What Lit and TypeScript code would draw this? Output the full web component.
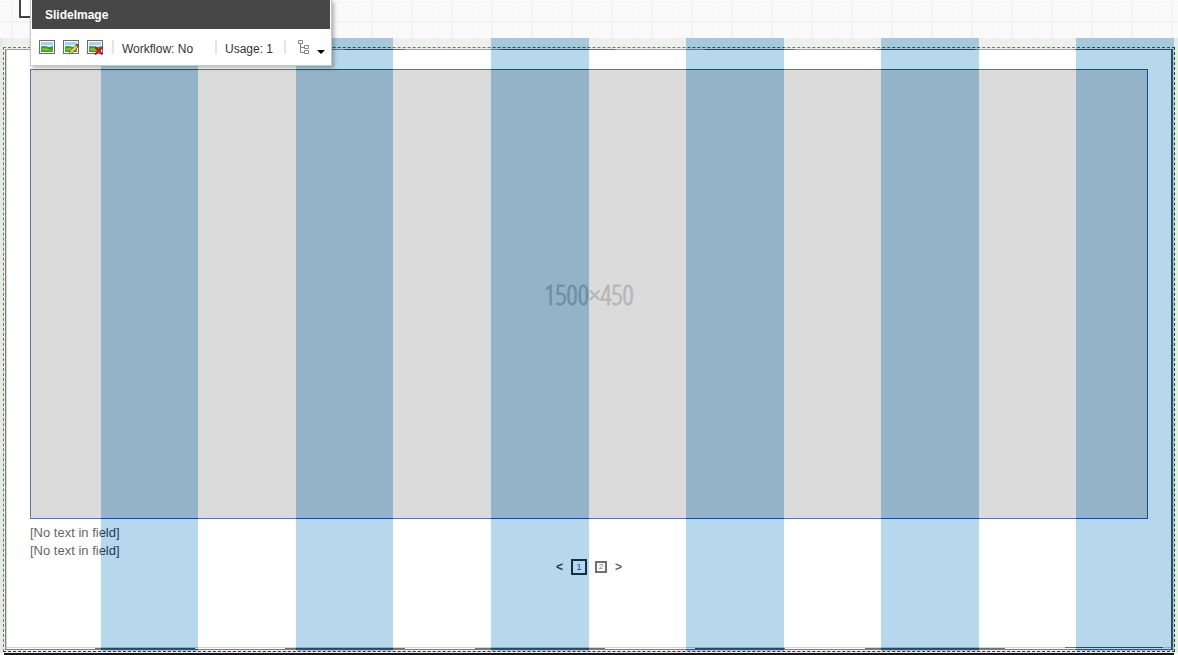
import { LitElement, html, svg, css } from "lit";
import { customElement } from "lit/decorators.js";

const picture = svg`
  <rect x="0.5" y="1.5" width="15" height="13" fill="#fff" stroke="#6b6b6b"/>
  <rect x="2" y="3" width="12" height="5" fill="#a5d2f0"/>
  <rect x="2" y="6" width="12" height="2" fill="#dceefa"/>
  <path d="M2 7.500Q5 6.500 8 7.500T14 7V13H2Z" fill="#3f9a2a"/>
  <path d="M2 10Q7 8 9 10T14 10V11.500Q8 12 2 11Z" fill="#7cc142"/>`;

@customElement("app-root")
export class AppRoot extends LitElement {
  static styles = css`
    :host {
      display: block;
      position: relative;
      min-height: 100vh;
      overflow: hidden;
      font: 13px/18px "Liberation Sans", Arial, sans-serif;
      color: #222;
      background-color: #fafafa;
      background-image:
        linear-gradient(90deg, #f3f3f3 2px, transparent 2px),
        linear-gradient(#f3f3f3 2px, transparent 2px),
        linear-gradient(90deg, #f7f7f7 1px, transparent 1px),
        linear-gradient(#f7f7f7 1px, transparent 1px);
      background-size: 40px 40px;
      background-position: 11px 0, 0 21px, 32px 0, 0 2px;
    }
    * { box-sizing: border-box; }
    .header { height: 38px; padding-left: 19px; }
    .tab { width: 60px; height: 18px; border: 2px solid #444; border-top: 0; background: #fff; }
    .stage { position: relative; padding: 9px 3px 1px; background: rgba(225, 225, 225, 0.65); }
    .zone { border: 1px dashed #006000; padding: 1px; }
    .panel {
      position: relative;
      border: 1px solid #444;
      background: #fff;
      padding: 19px 24px 20px;
      min-height: 601px;
    }
    .rough { position: absolute; inset: -1px; width: calc(100% + 2px); height: calc(100% + 2px); }
    .image {
      display: flex;
      align-items: center;
      justify-content: center;
      height: 450px;
      border: 1px solid #1e3c83;
      background: #ccc;
    }
    .size {
      font: 300 28px/36px "Open Sans Condensed Light", "Open Sans Condensed", "Liberation Sans Narrow", "Liberation Sans", sans-serif;
      color: #999;
      -webkit-text-stroke: 1px #999;
    }
    .fields { padding-top: 5px; }
    .fields p { margin: 0; }
    .pager {
      display: flex;
      align-items: center;
      justify-content: center;
      gap: 8px;
      height: 14px;
    }
    button { font: inherit; color: inherit; padding: 0; border: 0; background: none; cursor: pointer; }
    .arrow { font-weight: bold; font-size: 12px; line-height: 16px; }
    .page { width: 12px; height: 12px; border: 2px solid #333; font-size: 8px; line-height: 8px; color: #22a; }
    .page.current { width: 16px; height: 16px; border-color: #111; font-size: 9px; line-height: 12px; }
    .columns {
      position: absolute;
      inset: 0 4px 2px 3px;
      display: grid;
      grid-template-columns: repeat(12, 1fr);
      pointer-events: none;
    }
    .columns i { background: rgba(255, 255, 255, 0.3); }
    .columns i:nth-child(even) { background: rgba(18, 122, 192, 0.3); }
    .ground { height: 2px; margin: 0 4px; background: #1a1a1a; }
    .popup {
      position: absolute;
      top: 0;
      left: 30px;
      width: 302px;
      border: 1px solid #c8c8c8;
      border-top: 0;
      background: #fff;
      box-shadow: 2px 2px 4px rgba(0, 0, 0, 0.3);
      font-size: 12px;
      color: #333;
    }
    .title { margin: 0 1px; padding: 6px 13px 5px; font-size: 12px; line-height: 18px; color: #fff; background: #474747; }
    .tools { display: flex; align-items: center; height: 36px; padding: 0 5px 0 8px; }
    .tool { width: 16px; height: 16px; margin-right: 8px; }
    svg { display: block; }
    .info { border-left: 2px solid #e4e4e4; height: 14px; line-height: 18px; padding-left: 8px; }
    .workflow { width: 103px; margin-left: 1px; }
    .usage { width: 69px; }
    .tree { width: 42px; padding-left: 12px; border-left: 2px solid #e4e4e4; height: 14px; display: flex; gap: 7px; }
    .tree svg { flex: none; }
  `;

  render() {
    return html`
      <div class="header"><div class="tab"></div></div>
      <main class="stage">
        <div class="zone">
          <section class="panel">
            <svg class="rough" viewBox="0 0 1168 601" preserveAspectRatio="none" fill="none" aria-hidden="true">
              <path d="M0 .500H1168M0 598.500H1168M1.500 0V600" stroke="#999" stroke-opacity=".6"/>
              <path d="M340 .500H400M495 .500H610M700 .500H790M870 .500H970M1070 .500H1168M90 599.500H190M280 599.500H400M470 599.500H600M690 599.500H780M860 599.500H1000M1060 598.500H1158M1166.500 0V600" stroke="#333"/>
            </svg>
            <div class="image" role="img" aria-label="1500×450">
              <span class="size">1500×450</span>
            </div>
            <div class="fields">
              <p>[No text in field]</p>
              <p>[No text in field]</p>
            </div>
            <nav class="pager" aria-label="Slides">
              <button class="arrow" aria-label="Previous">&lt;</button>
              <button class="page current">1</button>
              <button class="page">2</button>
              <button class="arrow" aria-label="Next">&gt;</button>
            </nav>
          </section>
        </div>
        <div class="columns">${Array.from({ length: 12 }, () => html`<i></i>`)}</div>
      </main>
      <div class="ground"></div>
      <aside class="popup">
        <h1 class="title">SlideImage</h1>
        <div class="tools">
          <button class="tool" aria-label="Choose image"><svg width="16" height="16">${picture}</svg></button>
          <button class="tool" aria-label="Edit image"><svg width="16" height="16">${picture}
            <path d="M6 15L7 12L13 6L15 8L9 14Z" fill="#f1cf45" stroke="#85651b" stroke-width=".8"/>
            <path d="M12.500 6L14 4.500L16 6.500L14.500 8Z" fill="#b5282e"/></svg></button>
          <button class="tool" aria-label="Remove image"><svg width="16" height="16">${picture}
            <path d="M8 8L15.500 15.500M15.500 8L8 15.500" stroke="#c2141b" stroke-width="2"/></svg></button>
          <span class="info workflow">Workflow: No</span>
          <span class="info usage">Usage: 1</span>
          <button class="tree" aria-label="Usage tree">
            <svg width="12" height="14" fill="none" stroke="#858585"><path d="M.500 .500h4v3h-4zM6.500 5.500h4v3h-4zM6.500 10.500h4v3h-4zM2.500 4v8.500h4M2.500 7.500h4"/></svg>
            <svg width="8" height="14"><path d="M0 10H8L4 14Z" fill="#000"/></svg>
          </button>
        </div>
      </aside>
    `;
  }
}
